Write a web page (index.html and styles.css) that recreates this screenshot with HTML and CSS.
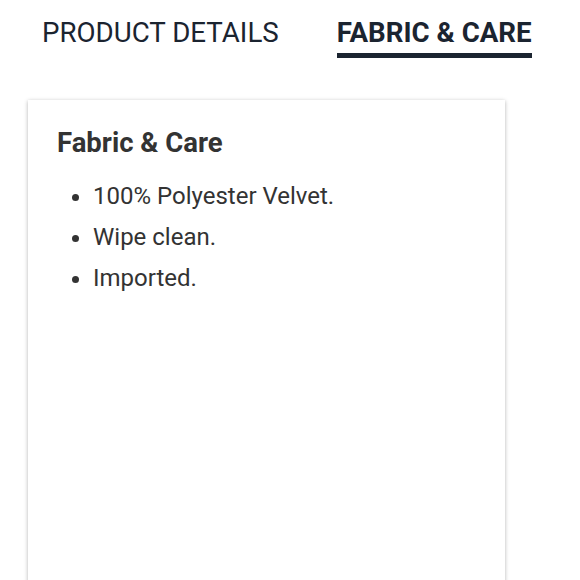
FILE: index.html
```html
<!DOCTYPE html>
<html>
<head>
<meta charset="utf-8">
<link rel="stylesheet" href="styles.css">
</head>
<body>
<div class="tabs">
  <div class="tab">PRODUCT DETAILS</div>
  <div class="tab active">FABRIC &amp; CARE</div>
</div>
<div class="card">
  <h2 class="title">Fabric &amp; Care</h2>
  <ul class="list">
    <li>100% Polyester Velvet.</li>
    <li>Wipe clean.</li>
    <li>Imported.</li>
  </ul>
</div>
</body>
</html>
```
FILE: styles.css
```css
html, body {
  margin: 0;
  padding: 0;
  background: #fff;
  height: 100%;
  overflow: hidden;
}
body {
  font-family: Roboto, "Liberation Sans", sans-serif;
}
.tabs {
  display: flex;
  gap: 58px;
  padding: 16px 0 0 42px;
}
.tab {
  font-size: 27.7px;
  color: #1b2430;
  line-height: 34px;
  padding-bottom: 3px;
  border-bottom: 5px solid transparent;
}
.tab.active {
  font-weight: 700;
  border-bottom-color: #1b2430;
}
.card {
  margin: 42px 0 0 28px;
  width: 477px;
  height: 600px;
  box-shadow: 0 1px 4px rgba(0,0,0,0.3);
  box-sizing: border-box;
  padding: 26px 0 0 29px;
  color: #333;
}
.title {
  margin: 0 0 16px;
  font-size: 27.5px;
  font-weight: 700;
  line-height: 34px;
}
.list {
  margin: 0;
  padding-left: 36px;
  font-size: 24px;
  line-height: 41px;
}
```
